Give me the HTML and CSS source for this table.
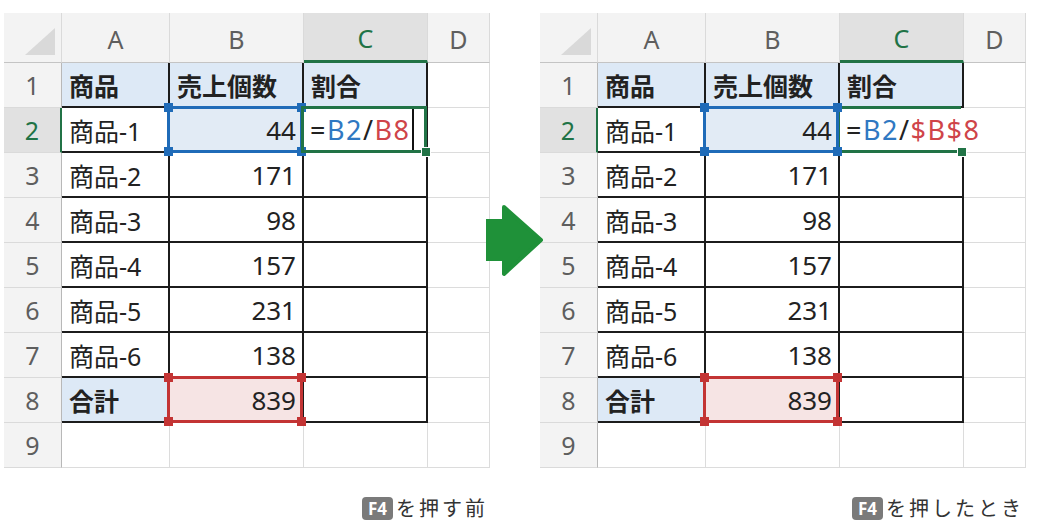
FILE: index.html
```html
<!DOCTYPE html>
<html lang="ja">
<head>
<meta charset="utf-8">
<title>F4 絶対参照</title>
<link rel="stylesheet" href="styles.css">
</head>
<body>
<div class="page">
  <figure class="panel">
    <div class="sheet">
      <div class="hd corner"><span class="tri"></span></div>
      <div class="hd col">A</div>
      <div class="hd col">B</div>
      <div class="hd col sel-col">C</div>
      <div class="hd col">D</div>

      <div class="hd row">1</div>
      <div class="c t head">商品</div>
      <div class="c t head">売上個数</div>
      <div class="c t head">割合</div>
      <div class="c"></div>

      <div class="hd row sel-row">2</div>
      <div class="c t">商品-1</div>
      <div class="c t num ref-blue"><span>44</span><i class="box"><b class="h tl"></b><b class="h tr"></b><b class="h bl"></b><b class="h br"></b></i></div>
      <div class="c t edit"><span class="f"><span class="k">=</span><span class="rb">B2</span><span class="k">/</span><span class="rr">B8</span></span><i class="cursor"></i><i class="gbox"><b class="fill"></b></i></div>
      <div class="c"></div>

      <div class="hd row">3</div>
      <div class="c t">商品-2</div>
      <div class="c t num">171</div>
      <div class="c t"></div>
      <div class="c"></div>

      <div class="hd row">4</div>
      <div class="c t">商品-3</div>
      <div class="c t num">98</div>
      <div class="c t"></div>
      <div class="c"></div>

      <div class="hd row">5</div>
      <div class="c t">商品-4</div>
      <div class="c t num">157</div>
      <div class="c t"></div>
      <div class="c"></div>

      <div class="hd row">6</div>
      <div class="c t">商品-5</div>
      <div class="c t num">231</div>
      <div class="c t"></div>
      <div class="c"></div>

      <div class="hd row">7</div>
      <div class="c t">商品-6</div>
      <div class="c t num">138</div>
      <div class="c t"></div>
      <div class="c"></div>

      <div class="hd row">8</div>
      <div class="c t head">合計</div>
      <div class="c t num ref-red"><span>839</span><i class="box"><b class="h tl"></b><b class="h tr"></b><b class="h bl"></b><b class="h br"></b></i></div>
      <div class="c t"></div>
      <div class="c"></div>

      <div class="hd row">9</div>
      <div class="c"></div>
      <div class="c"></div>
      <div class="c"></div>
      <div class="c"></div>
    </div>
    <figcaption class="caption"><span class="key">F4</span>を押す前</figcaption>
  </figure>

  <div class="arrow">
    <svg width="58" height="74" viewBox="0 0 58 74" aria-hidden="true">
      <rect x="0" y="15" width="20" height="42" fill="#1f9139"/>
      <path d="M18 3 L55 36 L18 70 Z" fill="#1f9139" stroke="#1f9139" stroke-width="4" stroke-linejoin="round"/>
    </svg>
  </div>

  <figure class="panel">
    <div class="sheet">
      <div class="hd corner"><span class="tri"></span></div>
      <div class="hd col">A</div>
      <div class="hd col">B</div>
      <div class="hd col sel-col">C</div>
      <div class="hd col">D</div>

      <div class="hd row">1</div>
      <div class="c t head">商品</div>
      <div class="c t head">売上個数</div>
      <div class="c t head">割合</div>
      <div class="c"></div>

      <div class="hd row sel-row">2</div>
      <div class="c t">商品-1</div>
      <div class="c t num ref-blue"><span>44</span><i class="box"><b class="h tl"></b><b class="h tr"></b><b class="h bl"></b><b class="h br"></b></i></div>
      <div class="c t edit wide"><span class="f"><span class="k">=</span><span class="rb">B2</span><span class="k">/</span><span class="rr">$B$8</span></span><i class="cursor"></i><i class="gbox open"><b class="fill"></b></i></div>
      <div class="c"></div>

      <div class="hd row">3</div>
      <div class="c t">商品-2</div>
      <div class="c t num">171</div>
      <div class="c t"></div>
      <div class="c"></div>

      <div class="hd row">4</div>
      <div class="c t">商品-3</div>
      <div class="c t num">98</div>
      <div class="c t"></div>
      <div class="c"></div>

      <div class="hd row">5</div>
      <div class="c t">商品-4</div>
      <div class="c t num">157</div>
      <div class="c t"></div>
      <div class="c"></div>

      <div class="hd row">6</div>
      <div class="c t">商品-5</div>
      <div class="c t num">231</div>
      <div class="c t"></div>
      <div class="c"></div>

      <div class="hd row">7</div>
      <div class="c t">商品-6</div>
      <div class="c t num">138</div>
      <div class="c t"></div>
      <div class="c"></div>

      <div class="hd row">8</div>
      <div class="c t head">合計</div>
      <div class="c t num ref-red"><span>839</span><i class="box"><b class="h tl"></b><b class="h tr"></b><b class="h bl"></b><b class="h br"></b></i></div>
      <div class="c t"></div>
      <div class="c"></div>

      <div class="hd row">9</div>
      <div class="c"></div>
      <div class="c"></div>
      <div class="c"></div>
      <div class="c"></div>
    </div>
    <figcaption class="caption"><span class="key">F4</span>を押したとき</figcaption>
  </figure>
</div>
</body>
</html>
```

FILE: styles.css
```css
* { box-sizing: border-box; }

html, body {
  margin: 0;
  padding: 0;
  background: #ffffff;
}

body {
  width: 1040px;
  height: 529px;
  overflow: hidden;
  font-family: "Noto Sans", "Noto Sans CJK JP", sans-serif;
  color: #222;
}

.page {
  display: flex;
  align-items: flex-start;
  padding: 13px 0 0 4px;
}

.panel {
  margin: 0;
  width: 486px;
  display: flex;
  flex-direction: column;
  align-items: flex-end;
}

.sheet {
  display: grid;
  grid-template-columns: 58px 108px 134px 124px 62px;
  grid-template-rows: 50px repeat(9, 45px);
  width: 486px;
  background: #fff;
}

/* headers */
.hd {
  background: #f3f3f3;
  color: #5e5e5e;
  font-size: 25px;
  display: flex;
  align-items: center;
  justify-content: center;
}

.corner {
  position: relative;
  border-right: 1px solid #dadada;
  border-bottom: 1px solid #c4c4c4;
}

.tri {
  position: absolute;
  right: 6px;
  bottom: 7px;
  width: 30px;
  height: 27px;
  background: #d9d9d9;
  clip-path: polygon(100% 0, 100% 100%, 0 100%);
}

.col {
  border-right: 1px solid #dadada;
  border-bottom: 1px solid #c4c4c4;
  padding-top: 2px;
}

.sel-col {
  background: #e1e1e1;
  color: #217346;
  border-bottom: 3px solid #217346;
}

.row {
  border-right: 1px solid #b8b8b8;
  border-bottom: 1px solid #dadada;
}

.sel-row {
  background: #e1e1e1;
  color: #217346;
  border-right: 2px solid #217346;
}

/* cells */
.c {
  position: relative;
  display: flex;
  align-items: center;
  padding: 0 6px 0 7px;
  font-size: 25px;
  white-space: nowrap;
  border-right: 1px solid #dcdcdc;
  border-bottom: 1px solid #dcdcdc;
}

.t {
  border-right: 2px solid #1c1c1c;
  border-bottom: 2px solid #1c1c1c;
}

.head {
  background: #dde9f6;
  font-family: "Noto Sans CJK JP", sans-serif;
  font-weight: 700;
  font-size: 25px;
}

.num {
  justify-content: flex-end;
  font-size: 26px;
  padding-right: 6px;
}

/* reference highlight boxes */
.ref-blue { background: #e2ebf5; }
.ref-red { background: #f6e4e4; }

.box {
  position: absolute;
  top: -2px;
  left: -3px;
  right: -1px;
  bottom: -2px;
  border: 3px solid;
  z-index: 2;
}

.ref-blue .box { border-color: #1f6bb8; color: #1f6bb8; }
.ref-red .box { border-color: #c33434; color: #c33434; }

.h {
  position: absolute;
  width: 9px;
  height: 9px;
  background: currentColor;
  z-index: 3;
}
.h.tl { top: -6px; left: -6px; }
.h.tr { top: -6px; right: -6px; }
.h.bl { bottom: -6px; left: -6px; }
.h.br { bottom: -6px; right: -6px; }

/* editing cell */
.edit {
  overflow: visible;
  padding-left: 6px;
  font-size: 27px;
}

.edit.wide {
  border-right-color: #ffffff;
  z-index: 1;
}

.f {
  display: inline-block;
  letter-spacing: 1.5px;
}
.k { color: #222; }
.rb { color: #2f78c2; }
.rr { color: #cf4449; }

.cursor {
  display: inline-block;
  width: 2px;
  height: 42px;
  margin-left: 1px;
  background: #111;
}

.gbox {
  position: absolute;
  top: -2px;
  left: -3px;
  right: -1px;
  bottom: -2px;
  border: 3px solid #217346;
  z-index: 2;
}

.gbox.open {
  border-right: 0;
  right: 1px;
}

.fill {
  position: absolute;
  right: -6px;
  bottom: -6px;
  width: 8px;
  height: 8px;
  background: #217346;
  box-shadow: 0 0 0 1px #fff;
}

.gbox.open .fill {
  right: -5px;
}

/* arrow (lies over the sheets' edges) */
.arrow {
  position: relative;
  z-index: 5;
  width: 50px;
  height: 300px;
  padding-top: 191px;
  display: flex;
  justify-content: flex-start;
}

.arrow svg {
  flex: none;
  display: block;
  margin-left: -4px;
}

/* captions */
.caption {
  margin: 28px 2px 0 0;
  display: flex;
  align-items: center;
  font-family: "Noto Sans CJK JP", sans-serif;
  font-size: 20px;
  line-height: 24px;
  letter-spacing: 3px;
  color: #333;
}

.key {
  display: inline-block;
  width: 31px;
  height: 23px;
  margin-right: 3px;
  border-radius: 4px;
  background: #7a7a7a;
  color: #fff;
  font-family: "Noto Sans", sans-serif;
  font-weight: 700;
  font-size: 17px;
  line-height: 23px;
  letter-spacing: 0;
  text-align: center;
}
```
